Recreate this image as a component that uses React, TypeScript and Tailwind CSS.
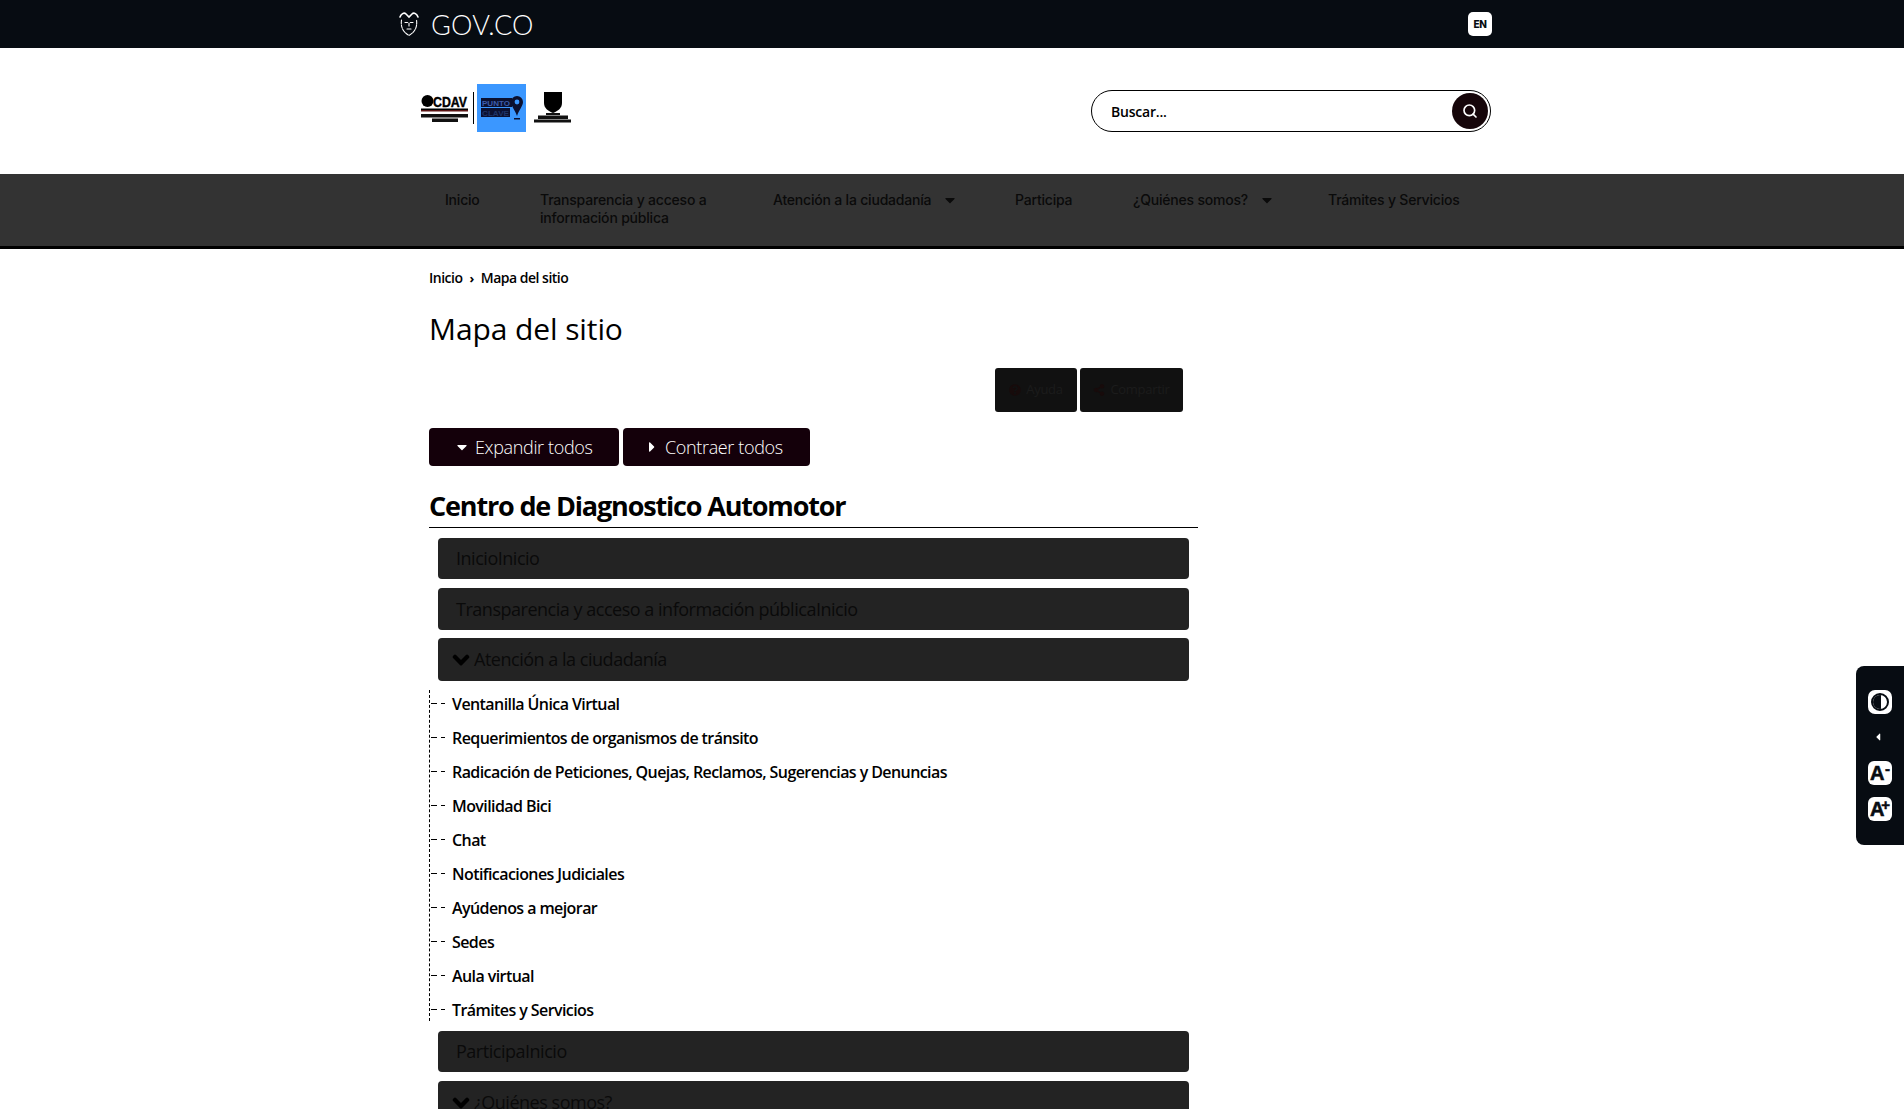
import { Search } from 'lucide-react'
import { FaCaretDown, FaCaretLeft, FaCaretRight, FaChevronDown, FaQuestionCircle, FaShareAlt } from 'react-icons/fa'

const openSans = "font-['Open_Sans',sans-serif]"

const attention = [
    'Ventanilla Única Virtual',
    'Requerimientos de organismos de tránsito',
    'Radicación de Peticiones, Quejas, Reclamos, Sugerencias y Denuncias',
    'Movilidad Bici',
    'Chat',
    'Notificaciones Judiciales',
    'Ayúdenos a mejorar',
    'Sedes',
    'Aula virtual',
    'Trámites y Servicios',
]

const navItems = [
    { label: 'Inicio', width: 'w-[95px]' },
    { label: 'Transparencia y acceso a información pública', width: 'w-[233px]', wrap: 'w-[180px]' },
    { label: 'Atención a la ciudadanía', width: 'w-[242px]', caret: true },
    { label: 'Participa', width: 'w-[118px]' },
    { label: '¿Quiénes somos?', width: 'w-[195px]', caret: true },
    { label: 'Trámites y Servicios', width: 'w-[150px]' },
]

function CrestLogo() {
    return (
        <svg width="20" height="26" viewBox="0 0 20 26" fill="none" stroke="white" strokeWidth="1.1" strokeLinecap="round">
            <path d="M2.5 9c-1 7 1.5 12 7.5 15.5C16 21 18.500 16 17.500 9" strokeDasharray="3.500 1.200" />
            <path d="M1 6c1-3 4-5 6-3l3 3 3-3c2-2 5 0 6 3" strokeWidth="1.600" />
            <path d="M6 11.500h2.500M11.500 11.500H14M8 18h4M10 12v3" />
        </svg>
    )
}

function PartnerLogos() {
    return (
        <div className="mb-[6px] flex items-center">
            <svg width="48" height="32" viewBox="0 0 48 32" className="mr-[4px]">
                <circle cx="6.500" cy="9" r="6" fill="black" />
                <text x="12" y="14.500" fontFamily="Liberation Sans" fontWeight="900" fontSize="14" stroke="black" strokeWidth="0.4" textLength="34" lengthAdjust="spacingAndGlyphs">CDAV</text>
                <rect x="0" y="16.500" width="47" height="1.500" fill="black" />
                <rect x="0" y="18" width="47" height="1.500" fill="#5a1414" />
                <rect x="0" y="22" width="47" height="3.500" fill="#111" />
                <rect x="11" y="26.500" width="26" height="3.500" fill="#111" />
            </svg>
            <div className="h-8 w-[1px] bg-black" />
            <div className="ml-[3px] flex h-12 w-[49px] items-center justify-center bg-[#3b97ff]">
                <svg width="42" height="26" viewBox="0 0 42 26">
                    <rect x="0" y="3" width="31" height="9" fill="#0b1030" />
                    <rect x="0" y="13" width="29" height="9" fill="#0b1030" />
                    <text x="1" y="11" fontFamily="Liberation Sans" fontWeight="700" fontSize="8" fill="#3d5cab" textLength="28" lengthAdjust="spacingAndGlyphs">PUNTO</text>
                    <text x="1" y="21" fontFamily="Liberation Sans" fontWeight="700" fontSize="8" fill="#1f3468" textLength="27" lengthAdjust="spacingAndGlyphs">CLAVE</text>
                    <path d="M36 1a6 6 0 0 1 6 6c0 4-4 8-6 14-2-6-6-10-6-14a6 6 0 0 1 6-6z" fill="#0b1030" />
                    <circle cx="36" cy="7" r="2.400" fill="#3b97ff" />
                    <rect x="33" y="23" width="6" height="1.500" fill="#0b1030" />
                </svg>
            </div>
            <svg width="38" height="32" viewBox="0 0 38 32" className="ml-[8px]">
                <path d="M10 0h18v11c0 5-4 8-9 10-5-2-9-5-9-10z" fill="black" />
                <rect x="12" y="21" width="14" height="2" fill="#111" />
                <rect x="4" y="23.500" width="30" height="3.500" fill="#111" />
                <rect x="0" y="27.500" width="37" height="3" fill="#111" />
            </svg>
        </div>
    )
}

function SideTile({ mark }: { mark: string }) {
    return (
        <div className="relative flex h-6 w-6 items-center justify-start rounded-[6px] bg-white pl-[2px] font-['Liberation_Sans',sans-serif] text-[20px] leading-none font-bold text-[#070c12]">
            <span className="[-webkit-text-stroke:0.6px_#070c12]">A</span>
            <span className="absolute top-0 right-[2px] text-[15px] leading-none font-bold [-webkit-text-stroke:0.5px_#070c12]">{mark}</span>
        </div>
    )
}

function AccordionBar({ children, height = 'h-[41px]' }: { children: React.ReactNode; height?: string }) {
    return (
        <div className={`mx-[9px] flex ${height} items-center rounded-[4px] bg-[#232323] text-[18px] font-medium tracking-[-0.48px] text-[#0a0a0a] ${openSans}`}>
            {children}
        </div>
    )
}

export default function App() {
    return (
        <div className="relative h-[1109px] overflow-hidden bg-white">
            <div className="h-12 bg-[#070c12]">
                <div className="ml-[399px] flex h-12 w-[1093px] items-center justify-between">
                    <div className="flex items-center">
                        <CrestLogo />
                        <span className="ml-[12px] font-['Lato',sans-serif] text-[27px] leading-none font-light tracking-[0.25px] text-white">GOV.CO</span>
                    </div>
                    <div className="flex h-6 w-6 items-center justify-center rounded-[5px] bg-white font-['Inter',sans-serif] text-[10px] font-extrabold tracking-[-0.5px] text-[#070c12]">EN</div>
                </div>
            </div>

            <header className="flex h-[126px] items-center justify-between pr-[413px] pl-[421px]">
                <PartnerLogos />
                <div className="flex h-[42px] w-[400px] items-center justify-between rounded-[21px] border-[1.5px] border-black pr-[2px] pl-[19px]">
                    <span className={`text-[14px] font-semibold tracking-[-0.2px] text-black ${openSans}`}>Buscar...</span>
                    <div className="flex h-9 w-9 items-center justify-center rounded-full bg-[#16060a]">
                        <Search className="h-4 w-4 text-white" strokeWidth={2.5} />
                    </div>
                </div>
            </header>

            <nav className="flex h-[75px] border-b-[3px] border-black bg-[#333] pt-[17px] pl-[445px] font-['Inter',sans-serif] text-[14px] leading-[18px] font-medium tracking-[-0.2px] text-[#0a0a0a]">
                {navItems.map((item) => (
                    <div key={item.label} className={`${item.width} shrink-0`}>
                        <div className={`flex items-start ${item.wrap ?? ''}`}>
                            <span>{item.label}</span>
                            {item.caret && <FaCaretDown className="mt-[1px] ml-[11px] h-4 w-4 text-[#0a0a0a]" />}
                        </div>
                    </div>
                ))}
            </nav>

            <main className={`ml-[429px] w-[769px] ${openSans} text-black`}>
                <div className="flex items-center pt-[20px] text-[14px] leading-[18px] font-semibold tracking-[-0.5px]">
                    <span>Inicio</span>
                    <span className="mx-[7px] text-[13px] leading-none font-bold">›</span>
                    <span>Mapa del sitio</span>
                </div>
                <h1 className="mt-[22px] text-[30px] leading-[40px] font-normal tracking-[-0.1px]">Mapa del sitio</h1>

                <div className="mt-[19px] flex justify-end gap-[3px] pr-[15px] text-[13px] tracking-[-0.3px] text-[#1c1c1c]">
                    <div className="flex h-[44px] w-[82px] items-center justify-center gap-[5px] rounded-[3px] bg-[#111]">
                        <FaQuestionCircle className="h-3 w-3 text-[#170b0b]" />
                        Ayuda
                    </div>
                    <div className="flex h-[44px] w-[103px] items-center justify-center gap-[5px] rounded-[3px] bg-[#111]">
                        <FaShareAlt className="h-3 w-3 text-[#170b0b]" />
                        Compartir
                    </div>
                </div>

                <div className="mt-[16px] flex gap-1 text-[18px] font-light tracking-[-0.35px] text-white">
                    <div className="flex h-[38px] w-[190px] items-center gap-[5px] rounded-[4px] bg-[#14000a] pl-[25px]">
                        <FaCaretDown className="h-4 w-4" />
                        Expandir todos
                    </div>
                    <div className="flex h-[38px] w-[187px] items-center gap-[5px] rounded-[4px] bg-[#14000a] pl-[21px]">
                        <FaCaretRight className="h-4 w-4" />
                        Contraer todos
                    </div>
                </div>

                <h2 className="mt-[21px] border-b border-black pb-[3px] text-[27px] leading-[37px] font-bold tracking-[-1.17px]">
                    Centro de Diagnostico Automotor
                </h2>

                <div className="mt-[10px] flex flex-col">
                    <AccordionBar><span className="pl-[18px]">InicioInicio</span></AccordionBar>
                    <div className="mt-[9px]">
                        <AccordionBar height="h-[42px]"><span className="pl-[18px]">Transparencia y acceso a información públicaInicio</span></AccordionBar>
                    </div>
                    <div className="mt-[8px]">
                        <AccordionBar height="h-[43px]">
                            <FaChevronDown className="ml-[14px] h-[18px] w-[18px] stroke-black stroke-[40px] text-black" />
                            <span className="pl-[4px]">Atención a la ciudadanía</span>
                        </AccordionBar>
                    </div>
                </div>

                <ul className="mt-[9px] flex h-[331px] flex-col border-l border-dashed border-black text-[16px] leading-[34px] font-semibold tracking-[-0.58px]">
                    {attention.map((item, index) => (
                        <li key={item} className={`flex h-[34px] shrink-0 items-center ${index === 0 ? '-mt-[3px]' : ''}`}>
                            <span className="ml-[1px] h-[1px] w-[6px] -translate-y-[1px] bg-black" />
                            <span className="ml-[4px] h-[1px] w-[4px] -translate-y-[1px] bg-black" />
                            <span className="ml-[7px]">{item}</span>
                        </li>
                    ))}
                </ul>

                <div className="mt-[10px] flex flex-col gap-[9px]">
                    <AccordionBar><span className="pl-[18px]">ParticipaInicio</span></AccordionBar>
                    <AccordionBar height="h-[43px]">
                        <FaChevronDown className="ml-[14px] h-[18px] w-[18px] stroke-black stroke-[40px] text-black" />
                        <span className="pl-[4px]">¿Quiénes somos?</span>
                    </AccordionBar>
                </div>
            </main>

            <aside className="absolute top-[666px] right-0 flex h-[179px] w-[48px] flex-col items-center rounded-l-[8px] bg-[#070c12] pt-[24px]">
                <div className="flex h-6 w-6 items-center justify-center rounded-[7px] bg-white">
                    <div className="relative h-[18px] w-[18px] overflow-hidden rounded-full border-2 border-[#070c12]">
                        <div className="absolute inset-y-0 left-0 w-[55%] bg-[#070c12]" />
                    </div>
                </div>
                <FaCaretLeft className="mt-[17px] mr-[4px] h-3 w-3 text-white" />
                <div className="mt-[18px]"><SideTile mark="-" /></div>
                <div className="mt-[12px]"><SideTile mark="+" /></div>
            </aside>
        </div>
    )
}
